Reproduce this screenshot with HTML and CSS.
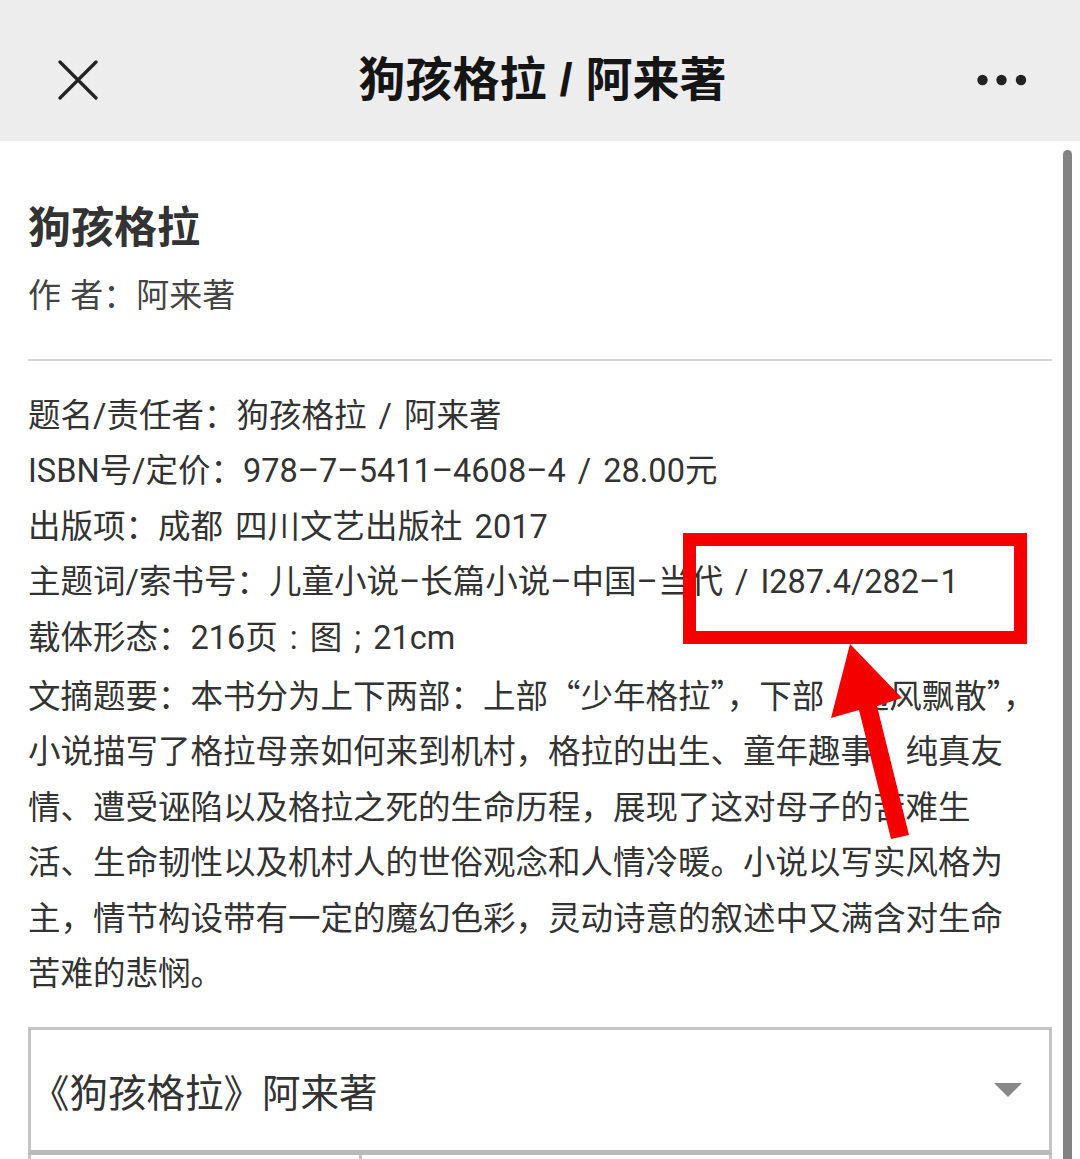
FILE: index.html
```html
<!DOCTYPE html>
<html lang="zh-CN">
<head>
    <meta charset="UTF-8">
    <meta name="viewport" content="width=device-width, initial-scale=1.0">
    <title>狗孩格拉 / 阿来著</title>
    <link rel="stylesheet" href="styles.css">
</head>
<body>
    <header class="topbar">
        <button class="icon-btn close-btn" aria-label="关闭">
            <svg width="40" height="40" viewBox="0 0 40 40"><path d="M2 2 L38 38 M38 2 L2 38" stroke="#222" stroke-width="3.2" stroke-linecap="round" fill="none"/></svg>
        </button>
        <h1 class="topbar-title">狗孩格拉 / 阿来著</h1>
        <button class="icon-btn more-btn" aria-label="更多">
            <svg width="50" height="12" viewBox="0 0 50 12"><circle cx="5.5" cy="6" r="5.2" fill="#222"/><circle cx="24.5" cy="6" r="5.2" fill="#222"/><circle cx="44" cy="6" r="5.2" fill="#222"/></svg>
        </button>
    </header>

    <div class="page">
        <main class="detail">
            <h2 class="book-title">狗孩格拉</h2>
            <p class="book-author">作 者：阿来著</p>
            <hr class="divider">

            <div class="fields">
                <p>题名/责任者：狗孩格拉 / 阿来著</p>
                <p>ISBN号/定价：978–7–5411–4608–4 / 28.00元</p>
                <p>出版项：成都 四川文艺出版社 2017</p>
                <p>主题词/索书号：儿童小说–长篇小说–中国–当代 / I287.4/282–1</p>
                <p>载体形态：216页 : 图 ; 21cm</p>
                <p class="abstract">文摘题要：本书分为上下两部：上部“少年格拉”，下部“随风飘散”，<br>小说描写了格拉母亲如何来到机村，格拉的出生、童年趣事、纯真友<br>情、遭受诬陷以及格拉之死的生命历程，展现了这对母子的苦难生<br>活、生命韧性以及机村人的世俗观念和人情冷暖。小说以写实风格为<br>主，情节构设带有一定的魔幻色彩，灵动诗意的叙述中又满含对生命<br>苦难的悲悯。</p>
            </div>

            <div class="select-box">
                <span class="select-text">《狗孩格拉》阿来著</span>
                <span class="caret"></span>
            </div>
            <div class="holdings-row">
                <div class="cell cell-left"></div>
                <div class="cell"></div>
            </div>
        </main>
        <div class="scrollbar"></div>
    </div>

    <svg class="annotation" width="1080" height="1159" viewBox="0 0 1080 1159">
        <rect x="689.5" y="539.5" width="331" height="98" fill="none" stroke="#f40000" stroke-width="13"/>
        <polygon points="850,644 902,698 877,706 909,835 891,839 859,710 831,718" fill="#f40000"/>
    </svg>
</body>
</html>
```

FILE: styles.css
```css
html, body {
    margin: 0;
    height: 1159px;
    overflow: hidden;
}
body {
    position: relative;
    background: #fff;
    color: #333;
    font-family: 'Liberation Sans', 'Noto Sans CJK SC', sans-serif;
}
.topbar {
    display: grid;
    grid-template-columns: 1fr auto 1fr;
    align-items: center;
    height: 122px;
    padding: 19px 53px 0 58px;
    background: #ededed;
}
.icon-btn {
    border: none;
    background: none;
    padding: 0;
    display: flex;
    cursor: pointer;
}
.close-btn {
    justify-self: start;
}
.more-btn {
    justify-self: end;
}
.topbar-title {
    margin: 0;
    font-size: 47px;
    font-weight: 700;
    color: #151515;
    line-height: 60px;
}
.page {
    display: flex;
    height: 1018px;
    overflow: hidden;
    padding-left: 28px;
}
.detail {
    flex: 1;
    min-width: 0;
}
.scrollbar {
    width: 9px;
    margin: 9px 8px 0 11px;
    background: #828282;
    border-radius: 5px 5px 0 0;
}
.book-title {
    margin: 57px 0 0;
    font-size: 43px;
    line-height: 60px;
    font-weight: 700;
    color: #333;
}
.book-author {
    margin: 18px 0 0;
    font-size: 33px;
    line-height: 40px;
    color: #444;
}
.divider {
    margin: 43px 0 0;
    border: none;
    height: 2px;
    background: #d6d6d6;
}
.fields {
    margin-top: 28px;
}
.fields p {
    margin: 0;
    font-family: Roboto, 'Noto Sans CJK SC', sans-serif;
    font-size: 32.5px;
    line-height: 55.4px;
    word-spacing: 4px;
    white-space: nowrap;
}
.fields .abstract {
    font-family: 'Noto Sans CJK SC', sans-serif;
}
.select-box {
    margin-top: 29px;
    height: 120px;
    border: 3px solid #c4c4c4;
    border-bottom-width: 5px;
    border-bottom-color: #b8b8b8;
    display: flex;
    align-items: center;
    justify-content: space-between;
    padding: 0 27px 0 0;
}
.select-text {
    font-family: 'Noto Sans CJK SC', sans-serif;
    font-size: 38.5px;
    color: #333;
}
.caret {
    width: 0;
    height: 0;
    border-left: 14px solid transparent;
    border-right: 14px solid transparent;
    border-top: 14px solid #888;
}
.holdings-row {
    display: flex;
    height: 40px;
    border-left: 3px solid #c4c4c4;
    border-right: 3px solid #c4c4c4;
}
.cell {
    flex: 1;
}
.cell-left {
    flex: none;
    width: 328px;
    border-right: 3px solid #c4c4c4;
}
.annotation {
    position: absolute;
    left: 0;
    top: 0;
    pointer-events: none;
}
```
